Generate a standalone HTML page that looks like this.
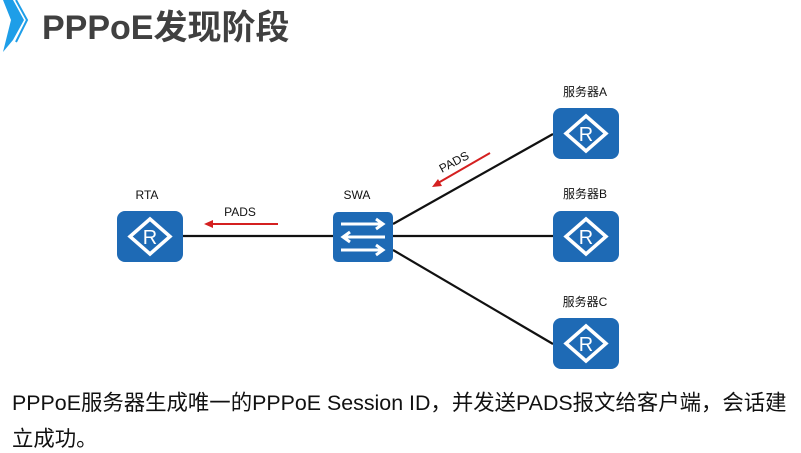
<!DOCTYPE html>
<html><head><meta charset="utf-8"><style>
body{margin:0;width:801px;height:451px;background:#fff;overflow:hidden;position:relative;font-family:"Liberation Sans","Noto Sans CJK SC",sans-serif}
.t{position:absolute;left:42px;top:0px;font-size:34px;font-weight:bold;color:#404040;letter-spacing:0px}
.p{position:absolute;left:12px;font-size:21.4px;color:#111;white-space:nowrap}
</style></head><body>
<svg width="801" height="451" style="position:absolute;left:0;top:0">
<defs>
<g id="r"><rect x="0" y="0" width="66" height="51" rx="8" fill="#1e6ab5"/>
<polygon points="33,8 53,25.5 33,43 13,25.5" fill="none" stroke="#fff" stroke-width="3.5"/>
<text x="33" y="33" font-size="20" fill="#fff" text-anchor="middle" font-family="Liberation Sans">R</text></g>
</defs>
<path d="M3,0 L13,0 L24,20 L13,40 L3,52 L11,20 Z" fill="#1e9ee8"/>
<path d="M16,0 L27,20 L16,42" fill="none" stroke="#1e9ee8" stroke-width="2"/>
<g stroke="#111" stroke-width="2.2">
<line x1="183" y1="236" x2="333" y2="236"/>
<line x1="393" y1="224" x2="553" y2="134"/>
<line x1="393" y1="236" x2="553" y2="236"/>
<line x1="393" y1="250" x2="553" y2="344"/>
</g>
<use href="#r" x="117" y="211"/>
<use href="#r" x="553" y="108"/>
<use href="#r" x="553" y="211"/>
<use href="#r" x="553" y="318"/>
<rect x="333" y="212" width="60" height="50" rx="5" fill="#1e6ab5"/>
<g stroke="#fff" stroke-width="3" fill="none">
<path d="M341,224 H382 M376,219 L383,224 L376,229"/>
<path d="M385,237 H344 M350,232 L343,237 L350,242"/>
<path d="M341,250 H382 M376,245 L383,250 L376,255"/>
</g>
<g stroke="#d42020" stroke-width="2" fill="#d42020">
<line x1="278" y1="224" x2="210" y2="224"/><polygon points="204,224 213,220 213,228" stroke="none"/>
<line x1="490" y1="153" x2="438" y2="183"/><polygon points="432,187 438,179 442,186" stroke="none"/>
</g>
<g font-size="12" fill="#111" text-anchor="middle">
<text x="147" y="199">RTA</text>
<text x="357" y="199">SWA</text>
<text x="240" y="216">PADS</text>
<text x="585" y="96">服务器A</text>
<text x="585" y="198">服务器B</text>
<text x="585" y="306">服务器C</text>
<text x="454" y="166" transform="rotate(-28 454 162)">PADS</text>
</g>
</svg>
<div class="t">PPPoE发现阶段</div>
<div class="p" style="top:386px">PPPoE服务器生成唯一的PPPoE Session ID，并发送PADS报文给客户端，会话建</div>
<div class="p" style="top:422px">立成功。</div>
</body></html>
